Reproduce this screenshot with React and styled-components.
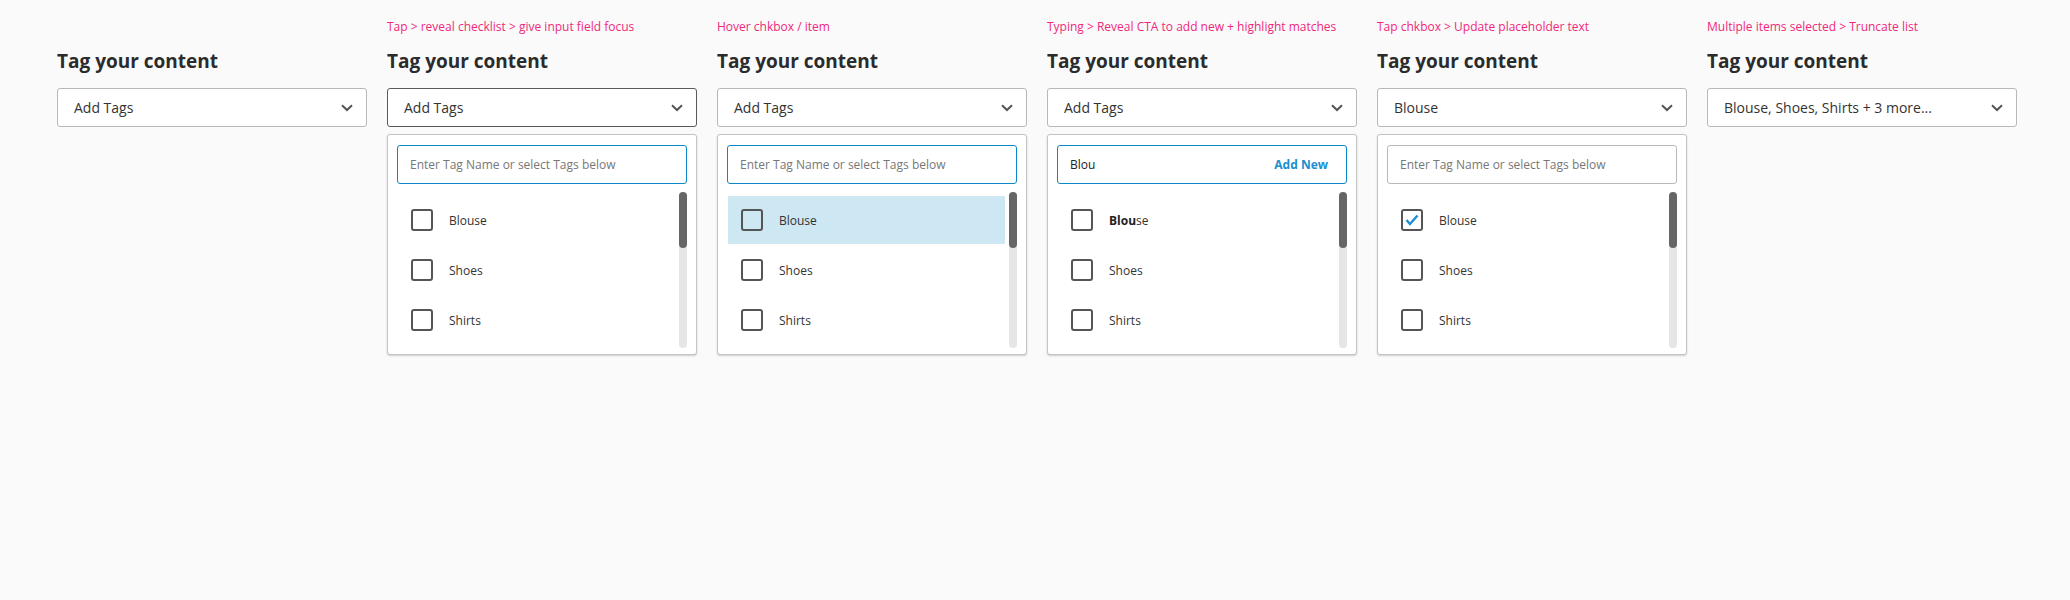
import React from "react";
import styled, { createGlobalStyle } from "styled-components";

const GlobalStyle = createGlobalStyle`
  body {
    margin: 0;
    background: #fafafa;
    font-family: "Open Sans", "Liberation Sans", sans-serif;
    color: #333;
  }
`;

const Page = styled.div`
  display: flex;
  align-items: flex-start;
  gap: 20px;
  padding: 19px 0 0 57px;
  min-height: 600px;
  box-sizing: border-box;
`;

const Column = styled.div`
  width: 310px;
  display: flex;
  flex-direction: column;
`;

const Note = styled.div`
  height: 16px;
  font-size: 12px;
  line-height: 16px;
  color: #f0287a;
  white-space: nowrap;
`;

const Heading = styled.h2`
  margin: 12px 0 0;
  font-size: 19px;
  line-height: 28px;
  font-weight: 700;
  color: #2b2b2b;
`;

const Select = styled.div`
  margin-top: 13px;
  height: 39px;
  box-sizing: border-box;
  border: 1px solid ${({ focused }) => (focused ? "#5a5a5a" : "#b8b8b8")};
  border-radius: 3px;
  background: #fff;
  display: flex;
  align-items: center;
  justify-content: space-between;
  padding: 0 13px 0 16px;
  font-size: 14px;
  color: #333;
`;

const Panel = styled.div`
  margin-top: 7px;
  height: 221px;
  box-sizing: border-box;
  border: 1px solid #c4c4c4;
  border-radius: 3px;
  background: #fff;
  box-shadow: 0 1px 2px rgba(0, 0, 0, 0.18);
  padding: 10px 9px 0 9px;
  display: flex;
  flex-direction: column;
`;

const Search = styled.div`
  height: 39px;
  box-sizing: border-box;
  border: 1px solid ${({ active }) => (active ? "#0a87c9" : "#b8b8b8")};
  border-radius: 3px;
  display: flex;
  align-items: center;
  justify-content: space-between;
  padding: 0 18px 0 12px;
  font-size: 12px;
`;

const Placeholder = styled.span`
  color: #777;
`;

const Typed = styled.span`
  color: #222;
`;

const AddNew = styled.span`
  color: #1a8fcf;
  font-weight: 700;
`;

const List = styled.div`
  margin-top: 8px;
  height: 156px;
  display: flex;
`;

const Items = styled.div`
  flex: 1;
  margin-left: 1px;
  padding-top: 4px;
  display: flex;
  flex-direction: column;
  gap: 2px;
`;

const Row = styled.div`
  height: 48px;
  display: flex;
  align-items: center;
  padding-left: 13px;
  background: ${({ hover }) => (hover ? "#cde7f3" : "transparent")};
  font-size: 12px;
  color: #333;
`;

const Box = styled.span`
  width: 22px;
  height: 22px;
  box-sizing: border-box;
  border: 2px solid #555;
  border-radius: 3px;
  display: flex;
  align-items: center;
  justify-content: center;
  flex-shrink: 0;
`;

const Label = styled.span`
  margin-left: 16px;
  b {
    font-weight: 700;
    color: #222;
  }
`;

const Track = styled.div`
  width: 8px;
  margin-left: 4px;
  border-radius: 4px;
  background: #e6e6e6;
`;

const Thumb = styled.div`
  height: 56px;
  border-radius: 4px;
  background: #666;
`;

const Chevron = () => (
  <svg width="12" height="8" viewBox="0 0 12 8">
    <path d="M1 1.2 L6 6 L11 1.2" fill="none" stroke="#555" strokeWidth="2" />
  </svg>
);

const Check = () => (
  <svg width="14" height="12" viewBox="0 0 14 12">
    <path d="M1.5 6 L5 10 L12.5 1.5" fill="none" stroke="#1b8fd0" strokeWidth="2.4" />
  </svg>
);

const tags = ["Blouse", "Shoes", "Shirts"];

const Dropdown = ({ typed, hoverFirst, checkFirst, searchActive }) => (
  <Panel>
    <Search active={searchActive}>
      {typed ? <Typed>{typed}</Typed> : <Placeholder>Enter Tag Name or select Tags below</Placeholder>}
      {typed && <AddNew>Add New</AddNew>}
    </Search>
    <List>
      <Items>
        {tags.map((t, i) => (
          <Row key={t} hover={hoverFirst && i === 0}>
            <Box>{checkFirst && i === 0 && <Check />}</Box>
            <Label>
              {typed && t.startsWith(typed) ? (
                <>
                  <b>{typed}</b>
                  {t.slice(typed.length)}
                </>
              ) : (
                t
              )}
            </Label>
          </Row>
        ))}
      </Items>
      <Track>
        <Thumb />
      </Track>
    </List>
  </Panel>
);

const states = [
  { note: "", value: "Add Tags" },
  { note: "Tap > reveal checklist > give input field focus", value: "Add Tags", focused: true, open: { searchActive: true } },
  { note: "Hover chkbox / item", value: "Add Tags", open: { searchActive: true, hoverFirst: true } },
  { note: "Typing > Reveal CTA to add new + highlight matches", value: "Add Tags", open: { searchActive: true, typed: "Blou" } },
  { note: "Tap chkbox > Update placeholder text", value: "Blouse", open: { checkFirst: true } },
  { note: "Multiple items selected > Truncate list", value: "Blouse, Shoes, Shirts + 3 more..." },
];

export default function App() {
  return (
    <>
      <GlobalStyle />
      <Page>
        {states.map((s, i) => (
          <Column key={i}>
            <Note>{s.note}</Note>
            <Heading>Tag your content</Heading>
            <Select focused={s.focused}>
              <span>{s.value}</span>
              <Chevron />
            </Select>
            {s.open && <Dropdown {...s.open} />}
          </Column>
        ))}
      </Page>
    </>
  );
}
